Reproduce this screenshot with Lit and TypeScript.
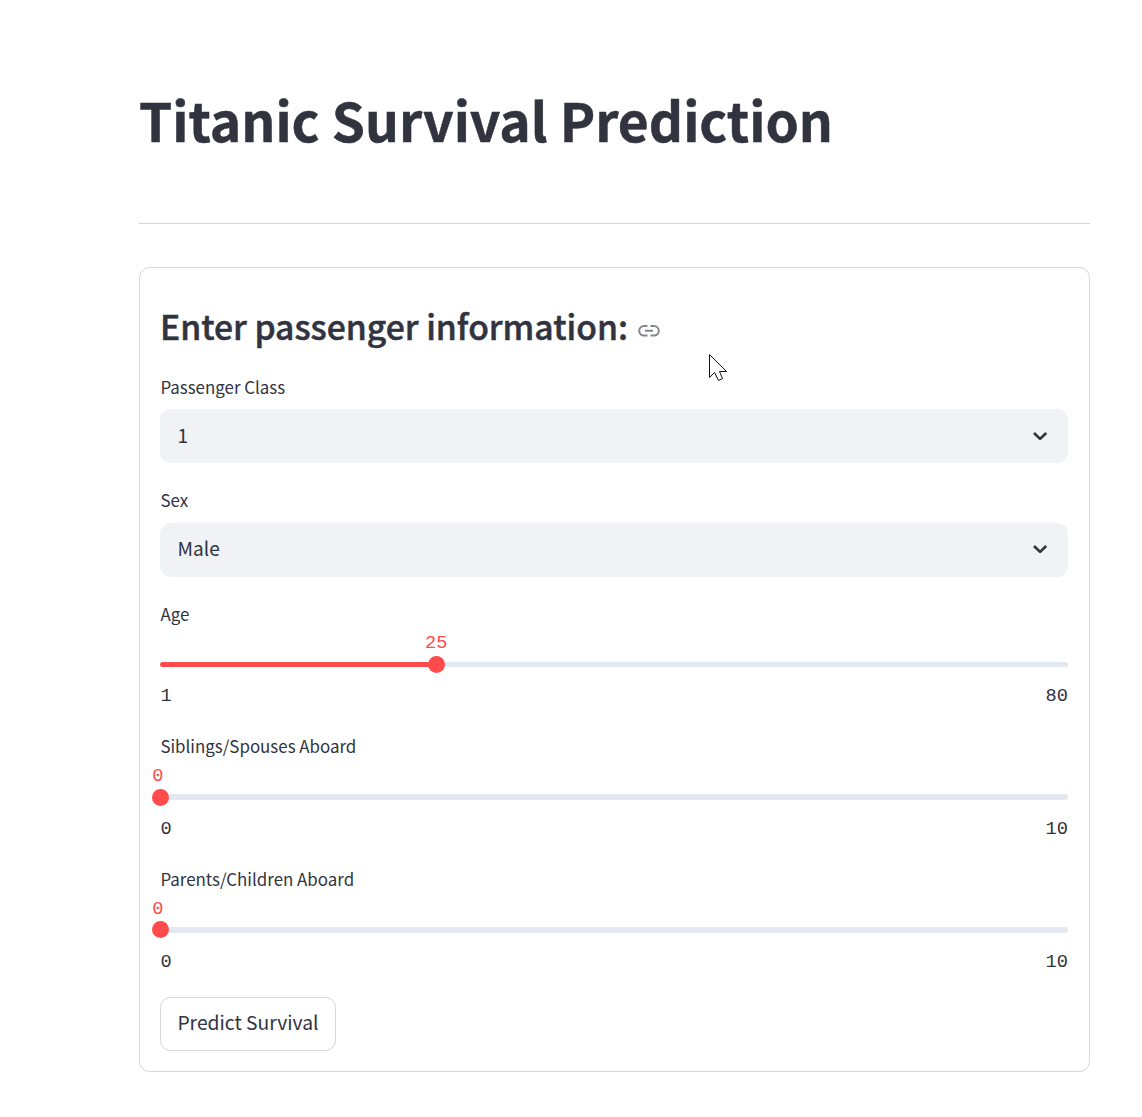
import { LitElement, html, css } from "lit";
import { customElement, property } from "lit/decorators.js";

@customElement("select-field")
class SelectField extends LitElement {
  @property() label = "";
  @property() value = "";

  static styles = css`
    :host { display: block; margin-bottom: 26.1px; }
    .label { height: 24px; line-height: 22px; font-size: 16.9px; margin-bottom: 9.33px; padding-left: 0.4px; white-space: nowrap; }
    .box {
      display: flex; align-items: center; justify-content: space-between;
      height: 53.9px; box-sizing: border-box; padding: 0 17px 2px 17.5px;
      border-radius: 10.67px; background: #f0f2f6; font-size: 19.1px; line-height: 28px;
    }
    .text { margin-top: -1px; }
    .chevron { width: 21.33px; height: 21.33px; display: block; }
  `;

  render() {
    return html`
      <div class="label">${this.label}</div>
      <div class="box">
        <span class="text">${this.value}</span>
        <svg class="chevron" viewBox="0 0 21.33 21.33">
          <path d="M4 8 L10.100 13.900 L16.200 8" fill="none" stroke="#31333f" stroke-width="2.7" stroke-linejoin="round" />
        </svg>
      </div>
    `;
  }
}

@customElement("slider-field")
class SliderField extends LitElement {
  @property() label = "";
  @property({ type: Number }) min = 0;
  @property({ type: Number }) max = 10;
  @property({ type: Number }) value = 0;

  static styles = css`
    :host { display: block; height: 132.8px; }
    .label { height: 24px; line-height: 21.6px; font-size: 16.9px; padding-left: 0.4px; white-space: nowrap; }
    .rail { margin-top: 35px; height: 5.4px; border-radius: 3px; background: #e4e8f0; position: relative; }
    .fill { height: 100%; border-radius: 3px; background: #ff4b4b; }
    .thumb {
      position: absolute; top: 50%; width: 17px; height: 17px; margin: -8.5px 0 0 -8.2px;
      border-radius: 50%; background: #ff4b4b;
    }
    .value {
      position: absolute; bottom: 18.5px; left: 50%; transform: translateX(-50%);
      color: #ff4b4b; line-height: 22px;
    }
    .edge { left: 0.5px; transform: none; }
    .mono { font-family: "Liberation Mono", monospace; font-size: 18.67px; }
    .limits { display: flex; justify-content: space-between; margin-top: 17px; padding-left: 0.6px; line-height: 24px; }
  `;

  render() {
    const percent = ((this.value - this.min) / (this.max - this.min)) * 100;
    return html`
      <div class="label">${this.label}</div>
      <div class="rail">
        <div class="fill" style="width:${percent}%"></div>
        <div class="thumb" style="left:${percent}%">
          <div class="value mono ${percent === 0 ? "edge" : ""}">${this.value}</div>
        </div>
      </div>
      <div class="limits mono"><span>${this.min}</span><span>${this.max}</span></div>
    `;
  }
}

@customElement("app-root")
class AppRoot extends LitElement {
  static styles = css`
    :host {
      display: block; position: relative; box-sizing: border-box; width: 1142px; height: 1117px;
      padding: 79px 52px 0 139px; background: #fff; color: #31333f; overflow: hidden;
      font-family: "Noto Sans CJK SC", "Open Sans", sans-serif;
    }
    .title {
      margin: 0; height: 144px; line-height: 80px; font-size: 53.3px; font-weight: 700;
      white-space: nowrap; box-sizing: border-box; -webkit-text-stroke: 0.5px #31333f;
    }
    .rule { height: 1px; background: #d6d6d9; }
    .card {
      margin-top: 43px; height: 805px; box-sizing: border-box; padding: 36px 21px 0 20px;
      border: 1px solid #d6d6d9; border-radius: 10.67px;
    }
    .heading { display: flex; align-items: center; height: 72px; }
    .heading-text {
      margin: -29px 0 0; font-size: 33.68px; line-height: 48px; font-weight: 500; white-space: nowrap;
      -webkit-text-stroke: 0.5px #31333f;
    }
    .link { width: 24px; height: 24px; margin: -19px 0 0 9px; }
    .button {
      display: block; box-sizing: border-box; width: 176px; height: 54px; margin-top: -4px; padding: 0 0 4px;
      border: 1px solid #d6d6d9; border-radius: 10.67px; background: #fff; color: inherit;
      font-family: inherit; font-size: 19.3px;
    }
    .cursor { position: absolute; left: 708px; top: 353px; width: 20px; height: 30px; }
  `;

  render() {
    return html`
      <h1 class="title">Titanic Survival Prediction</h1>
      <div class="rule"></div>
      <div class="card">
        <div class="heading">
          <h2 class="heading-text">Enter passenger information:</h2>
          <svg class="link" viewBox="0 0 24 24" fill="none" stroke="#83858c" stroke-width="2">
            <path d="M10.500 7H7a4.800 4.800 0 0 0 0 9.600H10.500M13.500 7h3.500a4.800 4.800 0 0 1 0 9.600H13.500M8 11.800h8" />
          </svg>
        </div>
        <select-field label="Passenger Class" value="1"></select-field>
        <select-field label="Sex" value="Male"></select-field>
        <slider-field label="Age" min="1" max="80" value="25"></slider-field>
        <slider-field label="Siblings/Spouses Aboard"></slider-field>
        <slider-field label="Parents/Children Aboard"></slider-field>
        <button class="button">Predict Survival</button>
      </div>
      <svg class="cursor" viewBox="0 0 20 30">
        <path d="M1.500 1.500V24.500L6.500 19.500L10.500 27.500L14.500 25.500L11.500 18.500H18.500Z" fill="#fff" stroke="#111122" stroke-width="1" />
      </svg>
    `;
  }
}
